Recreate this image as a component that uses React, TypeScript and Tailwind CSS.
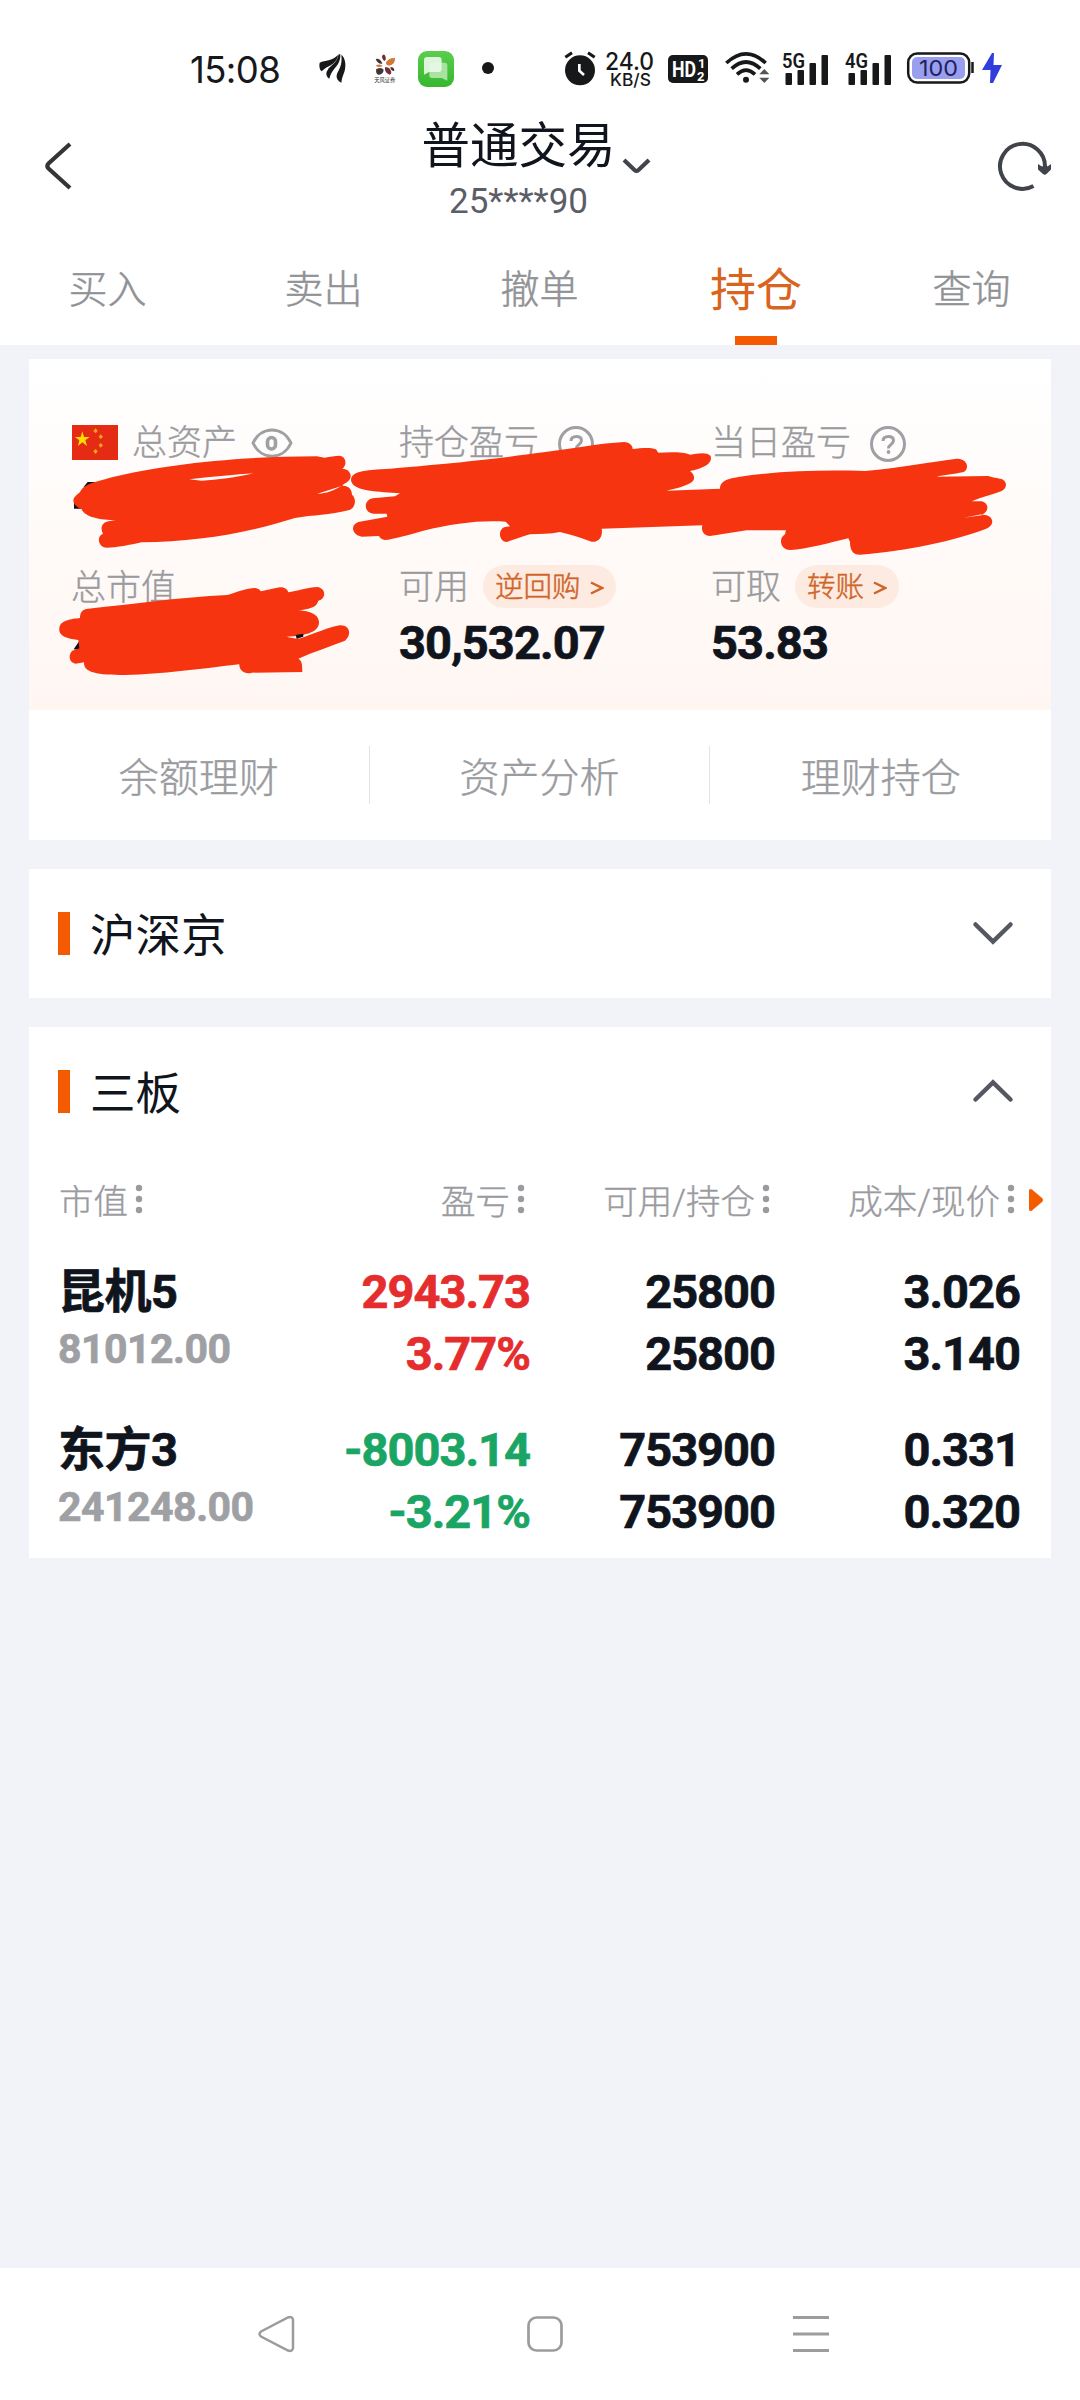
import type { ReactNode } from "react";

const tabs = ["买入", "卖出", "撤单", "持仓", "查询"];
const links = ["余额理财", "资产分析", "理财持仓"];

const holdings = [
  {
    name: "昆机5",
    value: "81012.00",
    profit: "2943.73",
    ratio: "3.77%",
    up: true,
    usable: "25800",
    held: "25800",
    cost: "3.026",
    price: "3.140",
  },
  {
    name: "东方3",
    value: "241248.00",
    profit: "-8003.14",
    ratio: "-3.21%",
    up: false,
    usable: "753900",
    held: "753900",
    cost: "0.331",
    price: "0.320",
  },
];

function Signal({ label }: { label: string }) {
  return (
    <svg className="mt-[-8px] h-[42px] w-[48px]" viewBox="0 -8 48 42" fill="#17181a">
      <text x="0" y="15.5" fontSize="21" fontWeight="600" fontFamily="Roboto, sans-serif" textLength="23" lengthAdjust="spacingAndGlyphs">
        {label}
      </text>
      <rect x="3.500" y="21" width="6.500" height="12" rx="1" />
      <rect x="15.500" y="18" width="6.500" height="15" rx="1" />
      <rect x="27.500" y="11" width="6.500" height="22" rx="1" />
      <rect x="39.500" y="3" width="6.500" height="30" rx="1" />
    </svg>
  );
}

function StatusBar() {
  return (
    <div className="flex h-[100px] items-center pt-[36px] pb-0 text-[#17181a]">
      <div className="ml-[190px] flex h-[64px] w-full items-start">
        <span className="w-[94px] shrink-0 font-['Inter',sans-serif] text-[36.5px] leading-[68px] tracking-[-0.6px]">15:08</span>
        <svg className="mt-[17px] ml-[35px] h-[30px] w-[28px] shrink-0" viewBox="0 0 84 90" fill="#17181a">
          <path d="M2 29C20 21 38 25 57 6C56 22 42 34 31 39C20 44 13 51 7 55C1 48 0 38 2 29Z" />
          <path d="M59 4L64 4C65 24 55 38 45 49C38 57 33 68 31 77C22 72 19 60 26 51C33 37 53 34 59 4Z" />
          <path d="M67 5C80 16 82 38 76 57C72 67 68 78 67 89C57 85 50 74 54 63C59 49 71 38 67 5Z" />
        </svg>
        <svg className="mt-[17px] ml-[26px] h-[30px] w-[24px] shrink-0" viewBox="0 0 72 90">
          <path d="M27 9Q33 0 37 9Q41 17 35 24Q27 20 27 9Z" fill="#7b2930" />
          <path d="M8 18Q22 15 28 32Q14 34 8 18Z" fill="#403434" />
          <path d="M39 28Q49 13 66 15Q67 35 48 38Q39 38 39 28Z" fill="#d17a36" />
          <path d="M8 38Q20 30 29 39Q18 46 8 38Z" fill="#c87943" />
          <path d="M10 48Q25 41 32 50Q31 65 15 65Q7 60 10 48Z" fill="#403638" />
          <path d="M36 43Q48 40 53 52Q58 62 50 65Q34 60 36 43Z" fill="#762c3b" />
          <path d="M52 43Q64 40 64 54Q53 54 52 43Z" fill="#49282d" />
          <text x="4" y="86" fontSize="16" textLength="63" fill="#333" fontFamily="'Noto Sans CJK SC', sans-serif">天风证券</text>
        </svg>
        <svg className="mt-[14px] ml-[20px] h-[38px] w-[38px] shrink-0" viewBox="0 0 114 114">
          <defs>
            <linearGradient id="chat" x1="0" y1="0" x2="0" y2="1">
              <stop offset="0" stopColor="#5bce4d" />
              <stop offset="1" stopColor="#35b72e" />
            </linearGradient>
          </defs>
          <rect x="3" y="3" width="108" height="108" rx="27" fill="url(#chat)" />
          <path d="M47 38H83Q91 38 91 46V92L74 84H45Q37 84 37 76V48Q37 38 47 38Z" fill="#a8e3a2" />
          <path d="M30 21H65Q74 21 74 30V57Q74 66 65 66H36L21 74V30Q21 21 30 21Z" fill="#e9f8e7" fillOpacity=".92" />
        </svg>
        <div className="mt-[26px] ml-[27px] size-[12px] shrink-0 rounded-full bg-[#17181a]" />
        <svg className="mt-[14px] ml-[69px] h-[36px] w-[34px] shrink-0" viewBox="0 0 102 108">
          <circle cx="51" cy="61" r="45" fill="#17181a" />
          <path d="M7 22L27 8M75 8L95 22" stroke="#17181a" strokeWidth="9" fill="none" />
          <path d="M49 42V62L63 75" stroke="#fff" strokeWidth="8" fill="none" />
        </svg>
        <svg className="mt-[8px] ml-[6px] h-[46px] w-[54px] shrink-0" viewBox="0 0 54 46" fill="#17181a" fontFamily="Inter, sans-serif" fontWeight="500">
          <text x="2" y="25.500" fontSize="24.500" textLength="49" lengthAdjust="spacingAndGlyphs">24.0</text>
          <text x="7" y="42" fontSize="17" textLength="41" lengthAdjust="spacingAndGlyphs">KB/S</text>
        </svg>
        <svg className="mt-[19px] ml-[11px] h-[28px] w-[40px] shrink-0" viewBox="0 0 40 28">
          <rect width="40" height="28" rx="5" fill="#17181a" />
          <g fill="#fff" fontFamily="Roboto, sans-serif" fontWeight="700">
            <text x="4" y="22" fontSize="21.500" textLength="24" lengthAdjust="spacingAndGlyphs">HD</text>
            <text x="30" y="13" fontSize="13">1</text>
            <text x="29" y="25.500" fontSize="13">2</text>
          </g>
        </svg>
        <svg className="mt-[13px] ml-[17px] h-[36px] w-[46px] shrink-0" viewBox="0 0 138 108">
          <g fill="none" stroke="#17181a" strokeWidth="11">
            <path d="M4 42Q63 -13 122 42" />
            <path d="M20 59Q63 19 106 59" />
            <path d="M36 76Q63 51 90 76" />
          </g>
          <circle cx="63" cy="92" r="9" fill="#17181a" />
          <path d="M103 76L118 60L133 76ZM103 86L118 102L133 86Z" fill="#555" />
        </svg>
        <div className="mt-[15px] ml-[11px] flex shrink-0 gap-[15px] pt-[1px]">
          <Signal label="5G" />
          <Signal label="4G" />
        </div>
        <svg className="mt-[16px] ml-[13px] h-[32px] w-[98px] shrink-0" viewBox="0 0 98 32">
          <rect x="2.200" y="1.500" width="61" height="29" rx="9" fill="#fff" stroke="#17181a" strokeWidth="2.500" />
          <rect x="6" y="5" width="53" height="22" rx="5" fill="#999fee" />
          <path d="M66.500 10V21" stroke="#17181a" strokeWidth="2.500" />
          <text x="32.500" y="23.500" fontSize="22" textAnchor="middle" textLength="39" lengthAdjust="spacingAndGlyphs" fill="#20225c" fontFamily="Inter, sans-serif">100</text>
          <path d="M86 1L76 18H84.500L84 31H87L96 13H87.500L88 1Z" fill="#313ddd" />
        </svg>
      </div>
    </div>
  );
}

function Header() {
  return (
    <div className="relative flex h-[134px] items-start justify-between">
      <svg className="mt-[40px] ml-[42px] h-[52px] w-[56px]" viewBox="0 0 56 52" fill="none" stroke="#333537" strokeWidth="4.200">
        <path d="M28 4L6.500 23.500Q4 26 6.500 28.500L28 48" />
      </svg>
      <div className="mr-[57px] flex flex-col items-center pt-[19px]">
        <div className="relative">
          <span className="block text-[48.5px] leading-[56px] text-[#10141d]">普通交易</span>
          <svg className="absolute top-[38px] left-[201px] h-[18px] w-[30px]" viewBox="0 0 30 18" fill="none" stroke="#41444b" strokeWidth="4.200">
            <path d="M2 3L12.500 13Q14.500 14.800 16.500 13L27 3" />
          </svg>
        </div>
        <span className="text-[35px] leading-[53px] text-[#5b5e66]">25****90</span>
      </div>
      <svg className="mt-[40px] mr-[28px] h-[54px] w-[56px]" viewBox="0 0 56 54" fill="none" stroke="#40444a" strokeWidth="4">
        <path d="M37.500 46A22.500 22.500 0 1 1 49 27" />
        <path d="M42 24Q49 30 55 24V29.500L50.500 34Q48.800 35.500 47 34L42 29.500Z" fill="#40444a" stroke="none" />
      </svg>
    </div>
  );
}

function Tabs() {
  return (
    <div className="grid h-[111px] grid-cols-5">
      {tabs.map((tab) => (
        <div key={tab} className="relative flex items-center justify-center">
          {tab === "持仓" ? (
            <>
              <span className="pt-[1px] text-[46px] leading-[60px] text-[#d96420]">{tab}</span>
              <span className="absolute bottom-0 h-[9px] w-[42px] bg-[#f45a00]" />
            </>
          ) : (
            <span className="pt-[1px] pr-[1px] text-[39px] leading-[60px] font-light text-[#909296] [-webkit-text-stroke:0.5px_#909296]">{tab}</span>
          )}
        </div>
      ))}
    </div>
  );
}

function Help() {
  return (
    <svg className="h-[36px] w-[36px]" viewBox="0 0 36 36" fill="none" stroke="#9fa0a4" strokeWidth="3">
      <circle cx="18" cy="18" r="16.500" />
      <path d="M13 15Q13 10.500 18.500 10.500Q23.500 10.500 23.500 14.500Q23.500 16.500 21 18.500Q18.500 20.200 18.500 22.500" />
      <circle cx="18.500" cy="26" r="1.900" fill="#9fa0a4" stroke="none" />
    </svg>
  );
}

function Pill({ children }: { children: ReactNode }) {
  return (
    <span className="flex h-[43px] items-center rounded-full bg-[#fdebe1] pr-[12px] pl-[12px] text-[28.5px] leading-[43px] text-[#d0652a] [-webkit-text-stroke:0.5px_#d0652a]">
      <span className="pt-[2px]">{children}</span>
      <svg className="mt-[3px] ml-[9px] h-[14px] w-[14px]" viewBox="0 0 14 14" fill="none" stroke="#d0652a" strokeWidth="2.500">
        <path d="M1 1.500L12 7L1 12.500" />
      </svg>
    </span>
  );
}

function Scribbles() {
  return (
    <svg className="pointer-events-none absolute inset-0 h-[351px] w-[1022px]" viewBox="29 359 1022 351" fill="#f63510">
      <g transform="translate(30 400) scale(.33333)">
        <path d="M160 262L173 246H196L190 254ZM132 308H154V326H132ZM131 748L150 720V750Z" fill="#10101a" />
        <path d="M130 300C133 285 150 280 152 272C165 250 200 245 240 233C400 195 600 170 860 169L884 173C900 170 915 167 928 167C948 168 953 195 937 206C960 206 970 230 955 243C948 250 940 252 937 257C955 256 966 268 966 284C980 295 978 325 955 331C900 345 850 345 795 354C650 400 500 425 335 427C300 435 260 443 230 443C205 443 198 408 219 401C210 385 215 368 235 364L258 361C210 360 165 352 155 328C140 322 130 312 130 300Z" />
        <path d="M88 685C90 660 125 657 150 654C150 638 155 628 175 626C310 612 450 592 592 585C620 577 650 564 675 564C685 565 690 570 692 574C715 570 740 562 755 562C768 564 773 570 775 577C800 573 835 562 862 561C888 565 890 595 865 602C860 622 840 627 803 631C830 632 868 640 867 668C865 695 835 706 770 710C785 713 800 717 812 715C850 702 900 680 930 676C960 675 966 705 945 722C900 740 850 755 805 776C815 782 817 790 817 816L665 818C645 824 627 812 628 793C500 808 400 822 285 825C200 825 160 818 162 787L137 791C115 788 115 762 127 752L148 745L145 720C120 716 85 712 88 685Z" />
        <path d="M478 238C550 230 620 224 670 220C620 232 560 240 515 242ZM862 281L935 258C910 272 885 282 862 281Z" fill="#fffaf7" />
        <path d="M797 705L820 701V710L800 716Z" fill="#10101a" />
      </g>
      <g transform="translate(340 400) scale(.33333)">
        <path d="M33 240C35 215 70 212 120 208C350 190 500 172 610 157C700 145 780 130 852 126C870 127 878 138 878 147C900 145 930 141 948 148L955 158C990 156 1030 155 1050 164C1075 160 1100 155 1112 168C1118 190 1095 203 1050 213C1065 225 1068 240 1050 250C1030 260 1010 266 980 272L1140 266C1140 240 1170 235 1200 230C1320 212 1450 210 1575 213C1680 203 1780 185 1850 176C1885 175 1890 210 1868 217C1845 222 1810 226 1790 230L1945 228C1950 231 1970 234 1980 236C2003 240 2003 265 1985 273C1960 283 1920 292 1895 304L1925 304C1948 310 1948 335 1925 344C1960 342 1970 375 1935 388C1850 420 1700 455 1560 464C1535 464 1530 445 1530 425L1525 415C1470 428 1400 448 1350 450C1320 448 1315 415 1335 403L1338 391H1220L1110 408C1090 407 1083 390 1087 376L785 386C790 410 775 428 755 425C725 415 690 402 660 396C630 402 600 402 570 403C545 410 520 420 500 426C478 425 472 392 492 382L510 379L497 365C420 360 340 370 250 392C210 403 160 418 135 420C125 418 120 415 117 408L65 410C35 405 30 375 55 366L142 350L140 341H100C70 338 70 300 98 295L165 289L180 280C120 275 35 275 33 240Z" />
        <path d="M1872 353L1925 343L1925 346Z" fill="#fffaf7" />
      </g>
    </svg>
  );
}

function Summary() {
  return (
    <section className="mt-[14px] bg-white">
      <div className="relative h-[351px] bg-linear-to-b from-[#ffffff] to-[#fff6f2] pt-[59px] pl-[42px]">
        <div className="grid h-[145px] grid-cols-[328px_312px_1fr] items-start text-[35px] font-light text-[#9a9b9f] [-webkit-text-stroke:0.4px_#9a9b9f]">
          <div className="flex h-[50px] items-center">
            <svg className="mt-[-1px] ml-[1px] h-[35px] w-[46px]" viewBox="0 0 138 105">
              <rect width="138" height="105" fill="#e62b14" />
              <path d="M31 19L36 36L53 36L40 46L45 63L31 52L18 63L22 46L9 36H26Z" fill="#ffde00" />
              <g fill="#f5a916">
                <path d="M71 10L77 18L71 25L64 18ZM86 28L93 35L86 42L80 35ZM86 54L93 61L86 68L80 61ZM71 72L77 79L71 87L64 79Z" />
              </g>
            </svg>
            <span className="ml-[14px] pt-[2px] leading-[50px]">总资产</span>
            <svg className="ml-[14px] h-[30px] w-[42px]" viewBox="0 0 42 30" fill="none" stroke="#9fa0a4" strokeWidth="3">
              <path d="M2 15C10 -2.500 32 -2.500 40 15C32 32.500 10 32.500 2 15Z" />
              <rect x="16.500" y="9.500" width="8" height="11.500" rx="4" strokeWidth="3.600" />
            </svg>
          </div>
          <div className="flex h-[50px] items-center">
            <span className="pt-[2px] leading-[50px]">持仓盈亏</span>
            <span className="mt-[2px] ml-[19px]"><Help /></span>
          </div>
          <div className="flex h-[50px] items-center">
            <span className="pt-[2px] leading-[50px]">当日盈亏</span>
            <span className="mt-[2px] ml-[19px]"><Help /></span>
          </div>
        </div>
        <div className="grid grid-cols-[328px_312px_1fr] items-start text-[35px] font-light text-[#9a9b9f]">
          <div className="flex h-[48px] items-center pt-[3px] leading-[48px] [-webkit-text-stroke:0.4px_#9a9b9f]">总市值</div>
          <div>
            <div className="flex h-[46px] items-center gap-[14px]">
              <span className="pt-[5px] [-webkit-text-stroke:0.4px_#9a9b9f]">可用</span> <Pill>逆回购</Pill>
            </div>
            <div className="mt-[7px] text-[47px] leading-[54px] font-bold tracking-[-0.9px] text-[#10141d] [-webkit-text-stroke:0.7px_#10141d]">30,532.07</div>
          </div>
          <div>
            <div className="flex h-[46px] items-center gap-[14px]">
              <span className="pt-[5px] [-webkit-text-stroke:0.4px_#9a9b9f]">可取</span> <Pill>转账</Pill>
            </div>
            <div className="mt-[7px] text-[47px] leading-[54px] font-bold tracking-[-0.9px] text-[#10141d] [-webkit-text-stroke:0.7px_#10141d]">53.83</div>
          </div>
        </div>
        <Scribbles />
      </div>
      <div className="grid h-[130px] grid-cols-3 items-center text-[40px] font-light text-[#9a9b9f] [-webkit-text-stroke:0.4px_#9a9b9f]">
        {links.map((link, i) => (
          <div
            key={link}
            className={
              i < 2
                ? "flex h-[58px] items-center justify-center border-r border-[#e2e3e6]"
                : "flex h-[58px] items-center justify-center"
            }
          >
            <span className="mt-[7px]">{link}</span>
          </div>
        ))}
      </div>
    </section>
  );
}

function SectionTitle({ title, open }: { title: string; open: boolean }) {
  return (
    <div className="flex h-[129px] items-center pr-[37px] pl-[29px]">
      <span className="h-[43px] w-[12px] bg-[#f45a00]" />
      <span className="ml-[20px] pt-[7px] text-[45.5px] leading-[60px] text-[#10141d]">{title}</span>
      <svg className="mt-[-2px] ml-auto h-[26px] w-[42px]" viewBox="0 0 42 26" fill="none" stroke="#555860" strokeWidth="4.500" strokeLinecap="round">
        <path d={open ? "M3.500 21.500L21 4.500L38.500 21.500" : "M3.500 4.500L21 21.500L38.500 4.500"} />
      </svg>
    </div>
  );
}

function SortLabel({ label }: { label: string }) {
  return (
    <div className="flex items-center justify-end">
      <span className="pt-[2px]">{label}</span>
      <svg className="mt-[-4px] ml-[7px] h-[30px] w-[8px]" viewBox="0 0 8 30" fill="#9a9b9f" stroke="none">
        <circle cx="4" cy="4" r="3.200" />
        <circle cx="4" cy="15" r="3.200" />
        <circle cx="4" cy="26" r="3.200" />
      </svg>
    </div>
  );
}

function Holdings() {
  return (
    <section className="mt-[29px] h-[531px] bg-white">
      <SectionTitle title="三板" open />
      <div className="relative grid h-[90px] grid-cols-[84px_382px_245px_245px] items-center pl-[30px] text-[34.5px] leading-[50px] font-light text-[#9a9b9f] [-webkit-text-stroke:0.4px_#9a9b9f]">
        <SortLabel label="市值" />
        <SortLabel label="盈亏" />
        <SortLabel label="可用/持仓" />
        <SortLabel label="成本/现价" />
        <svg className="absolute top-[32px] left-[999px] h-[24px] w-[16px]" viewBox="0 0 16 24" fill="#f45a00" stroke="none">
          <path d="M1 3Q1 0 4 1.500L14 10Q16 12 14 14L4 22.500Q1 24 1 21Z" />
        </svg>
      </div>
      {holdings.map((h) => (
        <div
          key={h.name}
          className="grid h-[158px] grid-cols-[220px_252px_245px_245px] pt-[15px] pl-[29px] text-right text-[47px] leading-[62px] font-bold tracking-[-1px] text-[#10141d] [-webkit-text-stroke:0.7px_currentColor]"
        >
          <div className="text-left">
            <div className="text-[47px] tracking-[-0.5px]">{h.name}</div>
            <div className="text-[41px] leading-[53px] tracking-[-0.5px] text-[#9fa0a4]">{h.value}</div>
          </div>
          <div className={h.up ? "text-[#e52d2d]" : "text-[#1aa564]"}>
            <div>{h.profit}</div>
            <div>{h.ratio}</div>
          </div>
          <div>
            <div>{h.usable}</div>
            <div>{h.held}</div>
          </div>
          <div>
            <div>{h.cost}</div>
            <div>{h.price}</div>
          </div>
        </div>
      ))}
    </section>
  );
}

function NavBar() {
  return (
    <nav className="flex h-[132px] items-start bg-white pt-[47px] pl-[258px]">
      <svg className="h-[38px] w-[38px]" viewBox="0 0 38 38" fill="none" stroke="#9c9c9c" strokeWidth="2.500">
        <path d="M3 16.500L30 2.500Q34.500 1 35 5V33Q34.500 37 30 35.500L3 21.500Q0 19 3 16.500Z" />
      </svg>
      <svg className="ml-[230px] h-[38px] w-[38px]" viewBox="0 0 38 38" fill="none" stroke="#9c9c9c" strokeWidth="2.700">
        <rect x="2.500" y="2.500" width="33" height="33" rx="8" />
      </svg>
      <svg className="ml-[228px] h-[38px] w-[38px]" viewBox="0 0 38 38" stroke="#9c9c9c" strokeWidth="3" strokeLinecap="square">
        <path d="M2.500 2.500H35.500M2.500 19H35.500M2.500 35.500H35.500" />
      </svg>
    </nav>
  );
}

export default function App() {
  return (
    <div className="flex h-[2400px] w-[1080px] flex-col overflow-hidden bg-[#f2f3f8] font-['Roboto','Noto_Sans_CJK_SC',sans-serif]">
      <header className="h-[345px] bg-white">
        <StatusBar />
        <Header />
        <Tabs />
      </header>
      <main className="flex-1 px-[29px]">
        <Summary />
        <section className="mt-[29px] bg-white">
          <SectionTitle title="沪深京" open={false} />
        </section>
        <Holdings />
      </main>
      <NavBar />
    </div>
  );
}
